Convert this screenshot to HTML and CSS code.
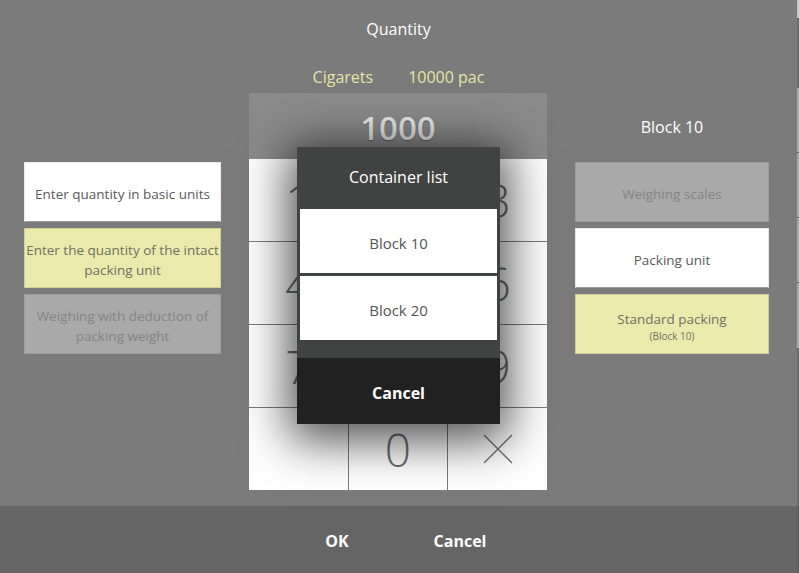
FILE: index.html
```html
<!DOCTYPE html>
<html lang="en">
<head>
<meta charset="utf-8">
<title>Quantity</title>
<link rel="stylesheet" href="styles.css">
</head>
<body>
<div class="app">
  <div class="screen">
    <main class="main">
      <h1 class="title">Quantity</h1>
      <div class="subtitle"><span>Cigarets</span><span>10000 pac</span></div>
      <div class="board">
        <div class="col col-left">
          <button class="opt opt-white">Enter quantity in basic units</button>
          <button class="opt opt-yellow">Enter the quantity of the intact<br>packing unit</button>
          <button class="opt opt-grey">Weighing with deduction of<br>packing weight</button>
        </div>
        <div class="keypad">
          <div class="display">1000</div>
          <div class="keys">
            <button class="key">1</button>
            <button class="key">2</button>
            <button class="key">3</button>
            <button class="key">4</button>
            <button class="key">5</button>
            <button class="key">6</button>
            <button class="key">7</button>
            <button class="key">8</button>
            <button class="key">9</button>
            <button class="key"></button>
            <button class="key">0</button>
            <button class="key"><svg class="x-icon" width="32" height="32" viewBox="0 0 32 32"><path d="M2 2 L30 30 M30 2 L2 30" stroke="#707070" stroke-width="1.4" fill="none"/></svg></button>
          </div>
        </div>
        <div class="col-right-wrap">
          <div class="unit-label">Block 10</div>
          <div class="col col-right">
            <button class="opt opt-grey">Weighing scales</button>
            <button class="opt opt-white">Packing unit</button>
            <button class="opt opt-yellow">Standard packing<span class="small">(Block 10)</span></button>
          </div>
        </div>
      </div>
    </main>
    <footer class="footer">
      <button class="foot-btn">OK</button>
      <button class="foot-btn">Cancel</button>
    </footer>
    <div class="overlay">
      <div class="modal">
        <div class="modal-head">Container list</div>
        <div class="modal-list">
          <button class="modal-item">Block 10</button>
          <button class="modal-item">Block 20</button>
        </div>
        <button class="modal-cancel">Cancel</button>
      </div>
    </div>
  </div>
  <div class="edge"></div>
</div>
</body>
</html>
```
FILE: styles.css
```css
* { box-sizing: border-box; }
html, body { margin: 0; padding: 0; }
body {
  width: 799px;
  height: 573px;
  overflow: hidden;
  font-family: "Open Sans", "Noto Sans", sans-serif;
  background: #7a7b7a;
}
button { font-family: inherit; cursor: pointer; }

.app { display: flex; height: 573px; }
.screen {
  position: relative;
  width: 797px;
  display: flex;
  flex-direction: column;
  background: #7a7b7a;
}
.edge {
  width: 2px;
  background: linear-gradient(to bottom,
    #c9c9c9 0, #c9c9c9 18px, #6b6b6b 18px, #6b6b6b 88px,
    #a9a9a9 88px, #a9a9a9 152px, #666 152px, #666 153px,
    #a9a9a9 153px, #a9a9a9 217px, #666 217px, #666 218px,
    #a9a9a9 218px, #a9a9a9 282px, #666 282px, #666 283px,
    #a9a9a9 283px, #a9a9a9 348px, #6b6b6b 348px, #6b6b6b 506px,
    #5e5e5e 506px);
}

.main { height: 506px; }
.title {
  margin: 0;
  height: 58px;
  line-height: 58px;
  text-align: center;
  color: #fff;
  font-size: 16px;
  font-weight: 400;
}
.subtitle {
  height: 35px;
  padding-top: 3px;
  line-height: 32px;
  display: flex;
  justify-content: center;
  gap: 35px;
  color: #e6e6a6;
  font-size: 16px;
}

.board {
  display: grid;
  grid-template-columns: 197px 298px 194px;
  column-gap: 28px;
  padding-left: 24px;
}
.col {
  display: flex;
  flex-direction: column;
  gap: 6px;
}
.col-left { padding-top: 69px; }

.opt {
  height: 60px;
  border: 1px solid rgba(0,0,0,0.08);
  font-size: 13.5px;
  line-height: 20px;
  font-weight: 400;
  padding: 3px 0 0;
  display: flex;
  flex-direction: column;
  align-items: center;
  justify-content: center;
  text-align: center;
  white-space: nowrap;
}
.opt-white { background: #fff; color: #5a5a5a; border-bottom-color: #9a9a9a; }
.opt-yellow { background: #eaeaad; color: #707062; border-color: #cfcf95; }
.opt-grey { background: #a9a9a9; color: #858585; border-color: #9c9c9c; }
.small { font-size: 10px; line-height: 14px; }

.keypad { display: flex; flex-direction: column; }
.display {
  height: 66px;
  background: #8b8b8b;
  color: #e8e8e8;
  font-size: 33px;
  font-weight: 600;
  text-align: center;
  line-height: 70px;
  text-shadow: 0 1px 1px rgba(0,0,0,0.35);
}
.keys {
  display: grid;
  grid-template-columns: repeat(3, 1fr);
  grid-template-rows: repeat(4, 82px);
  gap: 1px;
  background: #7a7a7a;
}
.key {
  background: #fff;
  border: 0;
  padding: 0;
  color: #6e6e6e;
  font-size: 46px;
  font-weight: 300;
  display: flex;
  align-items: center;
  justify-content: center;
}
.x-icon { display: block; }

.col-right-wrap { display: flex; flex-direction: column; }
.unit-label {
  height: 66px;
  line-height: 68px;
  text-align: center;
  color: #fff;
  font-size: 16px;
}
.col-right { padding-top: 3px; }

.footer {
  height: 67px;
  background: #656565;
  display: flex;
  justify-content: center;
}
.foot-btn {
  width: 123px;
  background: none;
  border: 0;
  color: #fff;
  font-size: 16px;
  font-weight: 700;
  padding: 2px 0 0;
}

.overlay {
  position: absolute;
  inset: 0;
  display: flex;
  align-items: center;
  justify-content: center;
  padding-bottom: 2px;
}
.modal {
  width: 203px;
  background: #414342;
  box-shadow: 0 8px 45px 8px rgba(0,0,0,0.7);
  display: flex;
  flex-direction: column;
}
.modal-head {
  height: 62px;
  line-height: 60px;
  text-align: center;
  color: #fff;
  font-size: 16px;
}
.modal-list {
  display: flex;
  flex-direction: column;
  gap: 3px;
  padding: 0 3px 18px;
}
.modal-item {
  height: 64px;
  background: #fff;
  border: 0;
  color: #555;
  font-size: 15px;
  padding: 3px 0 0;
}
.modal-cancel {
  height: 66px;
  background: #212121;
  border: 0;
  color: #fff;
  font-size: 16px;
  font-weight: 700;
  padding: 3px 0 0;
}
```
